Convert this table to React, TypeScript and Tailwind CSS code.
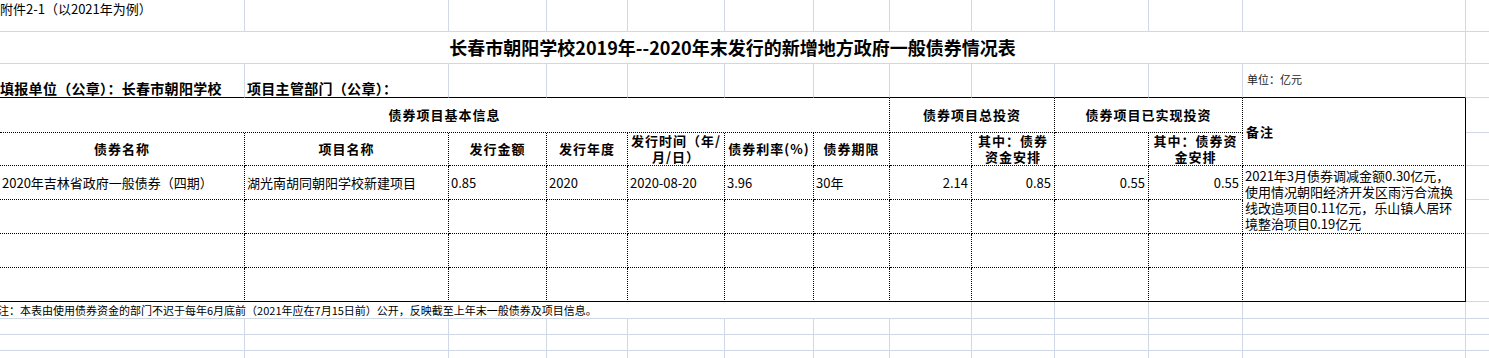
import React from 'react'

// 表格线：灰色网格线 / 黑色虚线 / 实线边框
const G = 'border-r border-b border-[#d0d7e5]'
const GB = 'border-b border-[#d0d7e5]'
const D = 'border-r border-b border-black border-dotted'
const RIGHT = '[border-right-style:solid]'
const BOTTOM = '[border-bottom-style:solid]'

const H = 'flex items-center justify-center text-center text-[13px] font-bold tracking-[1px] leading-[16px]'

function Empty({ className = '' }: { className?: string }) {
  return <div className={className} />
}

export default function App() {
  const dataLeft = 'flex items-center pl-[2px] text-[13px] whitespace-nowrap'
  const dataRight = 'flex items-center justify-end pr-[3px] text-[13px] whitespace-nowrap'

  return (
    <div className="h-[358px] w-[1489px] overflow-hidden bg-white text-black font-['Noto_Sans_CJK_SC',sans-serif]">
      <div className="grid grid-cols-[245px_204px_98px_81px_97px_89px_76px_82px_83px_94px_94px_223px_23px] grid-rows-[32px_32px_34px_35px_33px_34px_34px_34px_34px_17px_16px_16px_16px]">
        {/* 第1行 */}
        <div className={`${G} text-[13px] leading-[17px] whitespace-nowrap`}>附件2-1（以2021年为例）</div>
        {Array.from({ length: 11 }).map((_, i) => (
          <Empty key={'r1' + i} className={G} />
        ))}
        <Empty className={GB} />

        {/* 标题 */}
        <div className={`${G} col-span-12 flex items-center justify-center text-[18px] font-bold whitespace-nowrap`}>
          长春市朝阳学校2019年--2020年末发行的新增地方政府一般债券情况表
        </div>
        <Empty className={GB} />

        {/* 填报单位 */}
        <div className="border-r border-[#d0d7e5] border-b border-b-black flex items-end text-[14px] font-bold leading-[17px] tracking-[0.3px] whitespace-nowrap">
          填报单位（公章）：长春市朝阳学校
        </div>
        <div className="border-r border-[#d0d7e5] border-b border-b-black flex items-end pl-[2px] text-[14px] font-bold leading-[17px] tracking-[0.3px] whitespace-nowrap">
          项目主管部门（公章）：
        </div>
        {Array.from({ length: 9 }).map((_, i) => (
          <Empty key={'r3' + i} className="border-r border-[#d0d7e5] border-b border-b-black" />
        ))}
        <div className="border-r border-[#d0d7e5] border-b border-b-black flex items-center pl-[4px] pb-[2px] text-[11px] text-[#222] whitespace-nowrap">
          单位：亿元
        </div>
        <Empty className={GB} />

        {/* 表头第1行 */}
        <div className={`${D} col-span-7 ${H}`}>债券项目基本信息</div>
        <div className={`${D} col-span-2 ${H}`}>债券项目总投资</div>
        <div className={`${D} col-span-2 ${H}`}>债券项目已实现投资</div>
        <div className={`${D} ${RIGHT} row-span-2 flex items-center pl-[3px] text-[13px] font-bold tracking-[1px]`}>备注</div>
        <Empty className={GB} />

        {/* 表头第2行 */}
        <div className={`${D} ${H}`}>债券名称</div>
        <div className={`${D} ${H}`}>项目名称</div>
        <div className={`${D} ${H}`}>发行金额</div>
        <div className={`${D} ${H}`}>发行年度</div>
        <div className={`${D} ${H} tracking-[0.5px]`}>
          发行时间（年/
          <br />
          月/日）
        </div>
        <div className={`${D} ${H} tracking-[0.5px]`}>债券利率(%)</div>
        <div className={`${D} ${H}`}>债券期限</div>
        <Empty className={D} />
        <div className={`${D} ${H}`}>
          其中：债券
          <br />
          资金安排
        </div>
        <Empty className={D} />
        <div className={`${D} ${H}`}>
          其中：债券资
          <br />
          金安排
        </div>
        <Empty className={GB} />

        {/* 数据行 */}
        <div className={`${D} ${dataLeft}`}>2020年吉林省政府一般债券（四期）</div>
        <div className={`${D} ${dataLeft}`}>湖光南胡同朝阳学校新建项目</div>
        <div className={`${D} ${dataLeft}`}>0.85</div>
        <div className={`${D} ${dataLeft}`}>2020</div>
        <div className={`${D} ${dataLeft}`}>2020-08-20</div>
        <div className={`${D} ${dataLeft}`}>3.96</div>
        <div className={`${D} ${dataLeft}`}>30年</div>
        <div className={`${D} ${dataRight}`}>2.14</div>
        <div className={`${D} ${dataRight}`}>0.85</div>
        <div className={`${D} ${dataRight}`}>0.55</div>
        <div className={`${D} ${dataRight}`}>0.55</div>
        <div className={`${D} ${RIGHT} row-span-2 flex flex-col justify-center pl-[2px] text-[13px] leading-[16px] whitespace-nowrap`}>
          <span className="block h-[16px]">2021年3月债券调减金额0.30亿元，</span>
          <span className="block h-[16px]">使用情况朝阳经济开发区雨污合流换</span>
          <span className="block h-[16px]">线改造项目0.11亿元，乐山镇人居环</span>
          <span className="block h-[16px]">境整治项目0.19亿元</span>
        </div>
        <Empty className={GB} />

        {Array.from({ length: 11 }).map((_, i) => (
          <Empty key={'r7' + i} className={D} />
        ))}
        <Empty className={GB} />

        {Array.from({ length: 11 }).map((_, i) => (
          <Empty key={'r8' + i} className={D} />
        ))}
        <Empty className={`${D} ${RIGHT}`} />
        <Empty className={GB} />

        {Array.from({ length: 11 }).map((_, i) => (
          <Empty key={'r9' + i} className={`${D} ${BOTTOM}`} />
        ))}
        <Empty className={`${D} ${RIGHT} ${BOTTOM}`} />
        <Empty className={GB} />

        {/* 注 */}
        <div className={`${G} col-span-8 flex items-center text-[11px] whitespace-nowrap -indent-[2px]`}>
          注：本表由使用债券资金的部门不迟于每年6月底前（2021年应在7月15日前）公开，反映截至上年末一般债券及项目信息。
        </div>
        {Array.from({ length: 4 }).map((_, i) => (
          <Empty key={'r10' + i} className={G} />
        ))}
        <Empty className={GB} />

        {Array.from({ length: 3 }).map((_, r) => (
          <React.Fragment key={'g' + r}>
            {Array.from({ length: 12 }).map((_, i) => (
              <Empty key={i} className={G} />
            ))}
            <Empty className={GB} />
          </React.Fragment>
        ))}
      </div>
    </div>
  )
}
